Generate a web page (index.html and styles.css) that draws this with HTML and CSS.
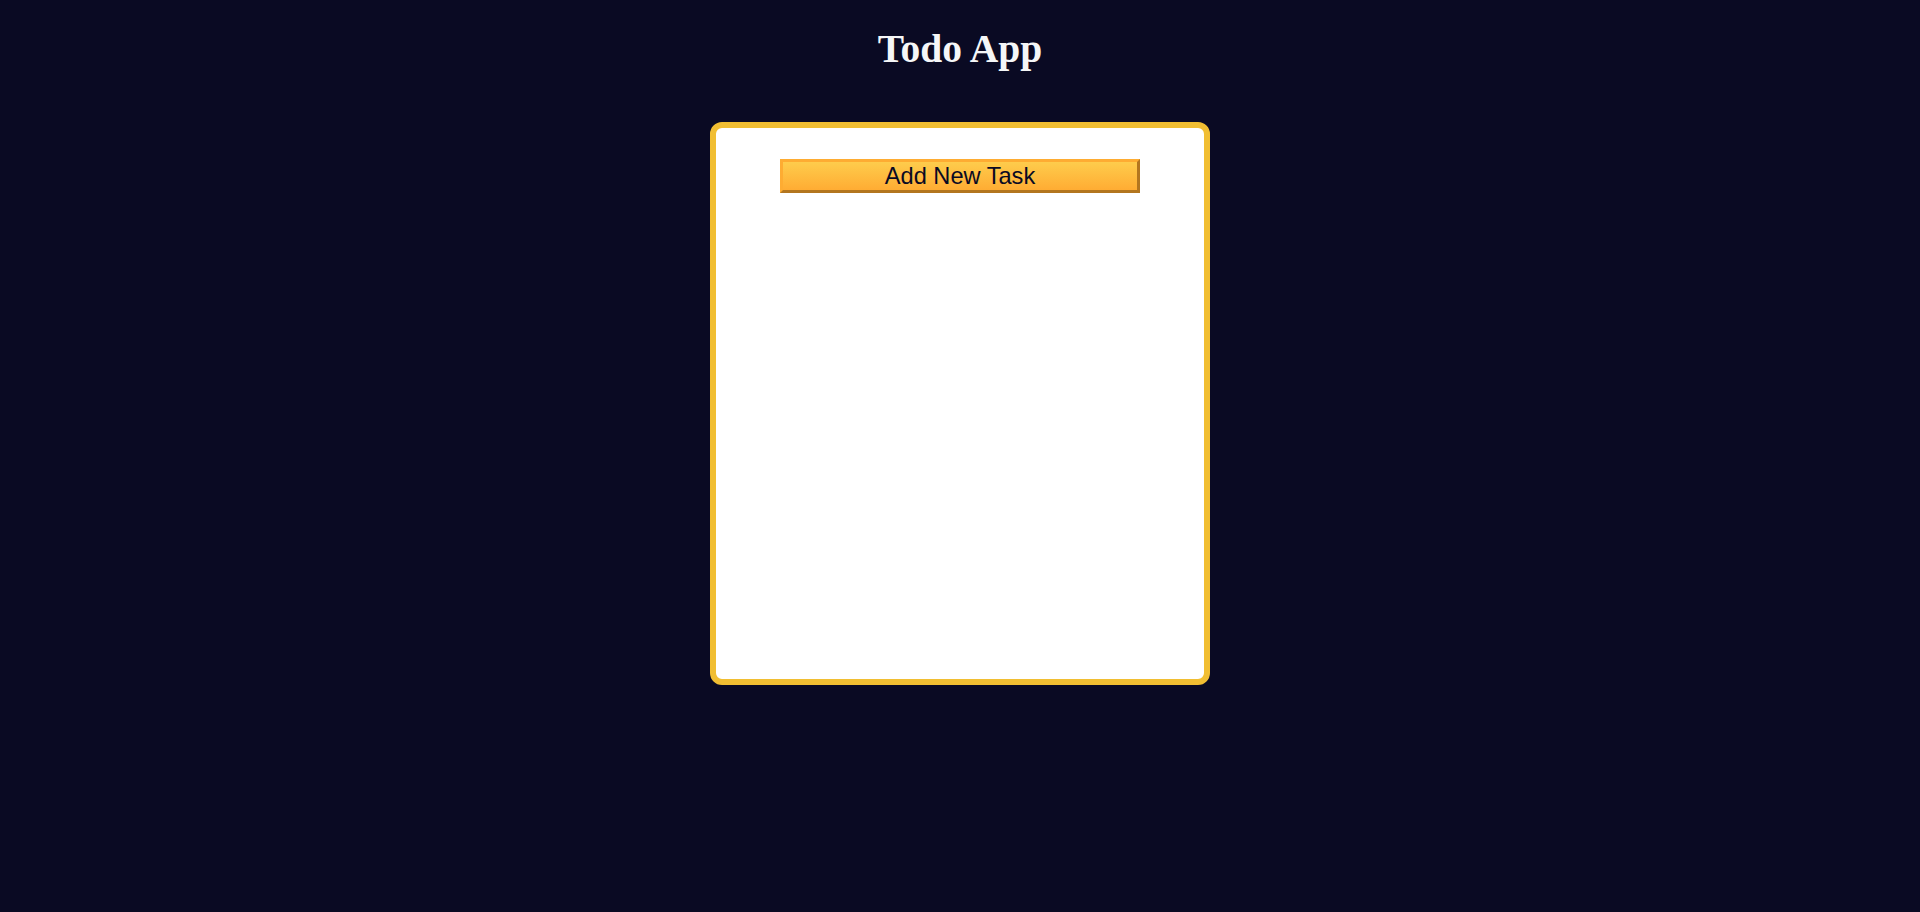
FILE: index.html
```html
<!DOCTYPE html>
<html lang="en">
<head>
<meta charset="utf-8">
<title>Todo App</title>
<link rel="stylesheet" href="styles.css">
</head>
<body>
<h1 class="title">Todo App</h1>
<main class="card">
  <button class="add-btn" type="button">Add New Task</button>
  <ul class="task-list"></ul>
</main>
</body>
</html>
```
FILE: styles.css
```css
html, body {
  margin: 0;
  padding: 0;
}
body {
  background: #0a0a23;
  min-height: 912px;
  font-family: "Liberation Serif", "Times New Roman", serif;
}
.title {
  margin: 27px 0 0;
  text-align: center;
  font-size: 39.5px;
  line-height: 44px;
  font-weight: bold;
  color: #f5f6f7;
}
.card {
  box-sizing: border-box;
  width: 500px;
  height: 563px;
  margin: 51px auto 0;
  background: #ffffff;
  border: 6px solid #f1be32;
  border-radius: 12px;
  padding-top: 31px;
}
.add-btn {
  display: block;
  box-sizing: border-box;
  width: 360px;
  height: 34px;
  margin: 0 auto;
  padding: 0;
  font-family: "Liberation Sans", Arial, sans-serif;
  font-size: 23.6px;
  line-height: 26px;
  color: #0a0a23;
  background: linear-gradient(#fecc4c, #ffac33);
  border-width: 3px;
  border-style: solid;
  border-color: #feac32 #b3761f #b3761f #feac32;
  cursor: pointer;
}
.task-list {
  list-style: none;
  margin: 0;
  padding: 0;
}
```
